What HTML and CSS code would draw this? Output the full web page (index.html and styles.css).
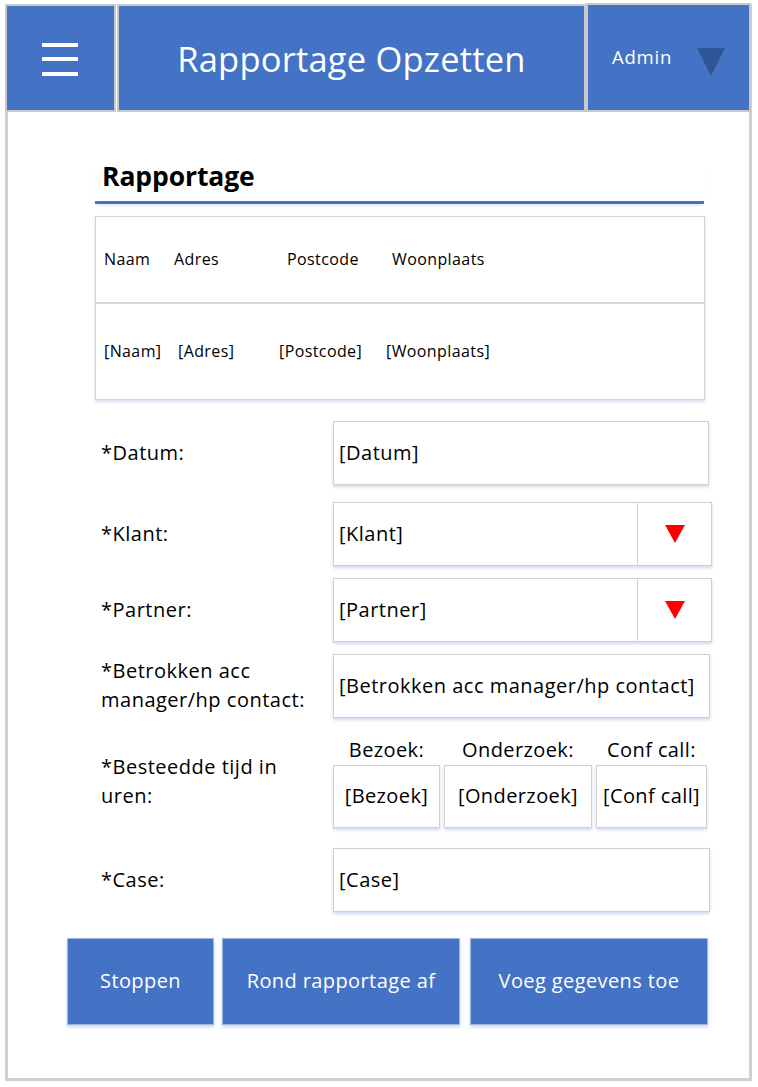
FILE: index.html
```html
<!DOCTYPE html>
<html lang="nl">
<head>
<meta charset="utf-8">
<title>Rapportage Opzetten</title>
<link rel="stylesheet" href="styles.css">
</head>
<body>
<div class="page">
  <header class="topbar">
    <div class="box menu">
      <svg width="36" height="34" viewBox="0 0 36 34"><rect x="0" y="0" width="36" height="4" fill="#fff"/><rect x="0" y="14" width="36" height="4" fill="#fff"/><rect x="0" y="29" width="36" height="4" fill="#fff"/></svg>
    </div>
    <div class="box title">Rapportage Opzetten</div>
    <div class="box admin">
      <span class="admin-name">Admin</span>
      <svg class="admin-caret" width="28" height="28" viewBox="0 0 28 28"><polygon points="0,0 28,0 14,28" fill="#2F5597"/></svg>
    </div>
  </header>

  <main class="content">
    <h1 class="heading">Rapportage</h1>

    <div class="table">
      <div class="trow">
        <span class="c c1">Naam</span><span class="c c2">Adres</span><span class="c c3">Postcode</span><span class="c">Woonplaats</span>
      </div>
      <div class="trow trow-last">
        <span class="c v1">[Naam]</span><span class="c v2">[Adres]</span><span class="c v3">[Postcode]</span><span class="c">[Woonplaats]</span>
      </div>
    </div>

    <div class="frow r-datum">
      <div class="label">*Datum:</div>
      <div class="field">[Datum]</div>
    </div>

    <div class="frow r-klant">
      <div class="label">*Klant:</div>
      <div class="field select"><span class="sel-text">[Klant]</span><span class="sel-btn"><svg width="20" height="18" viewBox="0 0 20 18"><polygon points="0,0 20,0 10,18" fill="#FF0000"/></svg></span></div>
    </div>

    <div class="frow r-partner">
      <div class="label">*Partner:</div>
      <div class="field select"><span class="sel-text">[Partner]</span><span class="sel-btn"><svg width="20" height="18" viewBox="0 0 20 18"><polygon points="0,0 20,0 10,18" fill="#FF0000"/></svg></span></div>
    </div>

    <div class="frow r-betr">
      <div class="label">*Betrokken acc<br>manager/hp contact:</div>
      <div class="field">[Betrokken acc manager/hp contact]</div>
    </div>

    <div class="frow r-tijd">
      <div class="label">*Besteedde tijd in<br>uren:</div>
      <div class="times">
        <div class="time t-bezoek"><div class="time-cap">Bezoek:</div><div class="time-box">[Bezoek]</div></div>
        <div class="time t-onder"><div class="time-cap">Onderzoek:</div><div class="time-box">[Onderzoek]</div></div>
        <div class="time t-conf"><div class="time-cap">Conf call:</div><div class="time-box">[Conf call]</div></div>
      </div>
    </div>

    <div class="frow r-case">
      <div class="label">*Case:</div>
      <div class="field">[Case]</div>
    </div>

    <div class="actions">
      <button class="btn b-stop">Stoppen</button>
      <button class="btn b-rond">Rond rapportage af</button>
      <button class="btn b-voeg">Voeg gegevens toe</button>
    </div>
  </main>
</div>
</body>
</html>
```

FILE: styles.css
```css
* { box-sizing: border-box; }

body {
  margin: 0;
  background: #ffffff;
  font-family: "Open Sans", "Noto Sans", "Liberation Sans", sans-serif;
  color: #000;
}

.page {
  margin: 4px 0 0 5px;
  width: 747px;
  height: 1077px;
  border: 3px solid #cfcfcf;
  border-top: none;
  background: #fff;
}

.topbar {
  display: flex;
  height: 108px;
  margin: 0 -3px;
}

.box {
  background: #4472C4;
  border: 2px solid #c9c9c9;
  color: #fff;
  display: flex;
  align-items: center;
}

.menu {
  width: 111px;
  justify-content: center;
  padding-left: 2px;
  padding-top: 3px;
}

.menu svg { margin-right: 4px; }

.title {
  width: 469px;
  margin-left: 1px;
  justify-content: center;
  font-size: 34.5px;
  padding-top: 0;
  letter-spacing: 0.2px;
}

.admin {
  width: 165px;
  margin-top: -1px;
  padding-left: 24px;
  font-size: 18.5px;
  letter-spacing: 0.8px;
}

.admin-name { margin-top: -2px; }

.admin-caret {
  margin-left: 25px;
  margin-top: 8px;
}

.content {
  padding-left: 87px;
  width: 708px;
}

.heading {
  margin: 49px 0 0 0;
  width: 609px;
  padding: 0 0 10px 7px;
  font-size: 26.5px;
  line-height: 30px;
  font-weight: 700;
  letter-spacing: -0.1px;
  border-bottom: 3px solid #4472C4;
  box-shadow: 0 3px 3px -2px rgba(68,114,196,0.25);
}

.table {
  margin-top: 12px;
  width: 610px;
  border: 1px solid #d2d2d2;
  box-shadow: 0 2px 3px rgba(180,195,220,0.5);
  font-size: 16px;
  letter-spacing: 0.4px;
}

.trow {
  display: flex;
  align-items: center;
  height: 87px;
  padding-left: 8px;
  padding-bottom: 1px;
  border-bottom: 2px solid #d8d8d8;
}

.trow-last {
  height: 95px;
  border-bottom: none;
}

.c1 { width: 70px; }
.c2 { width: 113px; }
.c3 { width: 105px; }
.v1 { width: 74px; }
.v2 { width: 101px; }
.v3 { width: 107px; }

.frow {
  display: flex;
  align-items: center;
  width: 617px;
}

.label {
  width: 238px;
  padding-left: 6px;
  padding-bottom: 2px;
  font-size: 20px;
  letter-spacing: 0.5px;
  line-height: 29px;
  white-space: nowrap;
}

.field {
  flex: 1;
  height: 64px;
  border: 1px solid #d0d0d0;
  box-shadow: 0 2px 3px rgba(170,190,225,0.55);
  display: flex;
  align-items: center;
  padding-left: 5px;
  padding-bottom: 2px;
  font-size: 20px;
  letter-spacing: 0.5px;
  white-space: nowrap;
}

.r-datum { margin-top: 21px; width: 614px; }
.r-klant { margin-top: 17px; }
.r-partner { margin-top: 12px; }
.r-betr { margin-top: 12px; width: 615px; }
.r-tijd { margin-top: 17px; }
.r-case { margin-top: 20px; width: 615px; }

.select {
  padding-left: 0;
  padding-bottom: 0;
}

.sel-text {
  flex: 1;
  padding-left: 5px;
  padding-bottom: 2px;
}

.sel-btn {
  width: 74px;
  height: 100%;
  border-left: 1px solid #d0d0d0;
  display: flex;
  align-items: center;
  justify-content: center;
}

.times {
  display: flex;
}

.time {
  display: flex;
  flex-direction: column;
  align-items: center;
}

.time-cap {
  font-size: 20px;
  letter-spacing: 0.4px;
  line-height: 29px;
  height: 30px;
  white-space: nowrap;
}

.time-box {
  height: 63px;
  width: 100%;
  border: 1px solid #d0d0d0;
  box-shadow: 0 2px 3px rgba(170,190,225,0.55);
  display: flex;
  align-items: center;
  justify-content: center;
  padding-bottom: 2px;
  font-size: 20px;
  letter-spacing: 0.4px;
  white-space: nowrap;
}

.t-bezoek { width: 107px; }
.t-onder { width: 148px; margin-left: 4px; }
.t-conf { width: 111px; margin-left: 4px; }

.actions {
  display: flex;
  margin: 26px 0 0 -28px;
}

.btn {
  height: 87px;
  background: #4472C4;
  border: 1px solid #9fb6df;
  color: #fff;
  font-family: inherit;
  font-size: 20px;
  letter-spacing: 0.4px;
  box-shadow: 0 2px 3px rgba(150,175,220,0.55);
  padding: 0 0 2px 0;
}

.b-stop { width: 147px; }
.b-rond { width: 238px; margin-left: 8px; }
.b-voeg { width: 238px; margin-left: 10px; }
```
